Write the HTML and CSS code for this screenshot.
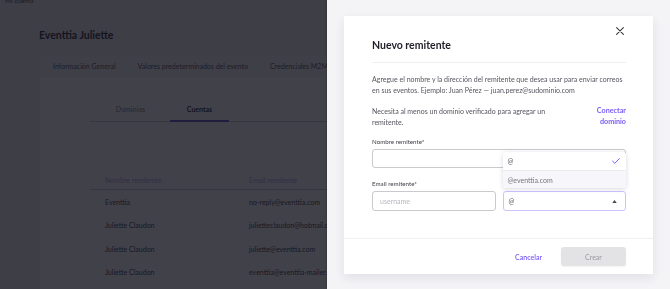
FILE: index.html
```html
<!DOCTYPE html>
<html lang="es">
<head>
<meta charset="utf-8">
<title>Nuevo remitente</title>
<link rel="stylesheet" href="styles.css">
</head>
<body>
<div class="page">
  <div class="crumb">Mi cuenta</div>
  <h1 class="page-title">Eventtia Juliette</h1>
  <nav class="tabs">
    <span class="tab">Información General</span>
    <span class="tab">Valores predeterminados del evento</span>
    <span class="tab">Credenciales M2M</span>
  </nav>
  <section class="panel">
    <div class="subtabs">
      <span class="subtab">Dominios</span>
      <span class="subtab active">Cuentas</span>
    </div>
    <div class="table">
      <div class="row head"><span>Nombre remitente</span><span>Email remitente</span></div>
      <div class="row"><span>Eventtia</span><span>no-reply@eventtia.com</span></div>
      <div class="row"><span>Juliette Claudon</span><span>julietteclaudon@hotmail.com</span></div>
      <div class="row"><span>Juliette Claudon</span><span>juliette@eventtia.com</span></div>
      <div class="row"><span>Juliette Claudon</span><span>eventtia@eventtia-mailer.com</span></div>
    </div>
  </section>
</div>
<div class="overlay"></div>
<aside class="drawer">
  <div class="modal">
    <div class="modal-head">
      <div class="close-row">
        <button class="close" aria-label="Cerrar">
          <svg viewBox="0 0 8 8" width="8" height="8"><path d="M0.6 0.6 L7.4 7.4 M7.4 0.6 L0.6 7.4" stroke="#3a3a40" stroke-width="1.1" stroke-linecap="round"/></svg>
        </button>
      </div>
      <h2 class="modal-title">Nuevo remitente</h2>
    </div>
    <div class="modal-body">
      <p class="intro">Agregue el nombre y la dirección del remitente que desea usar para enviar correos en sus eventos. Ejemplo: Juan Pérez — juan.perez@sudominio.com</p>
      <div class="notice">
        <p>Necesita al menos un dominio verificado para agregar un remitente.</p>
        <a class="link">Conectar<br>dominio</a>
      </div>
      <label class="label">Nombre remitente*</label>
      <div class="input"></div>
      <label class="label second">Email remitente*</label>
      <div class="email-row">
        <div class="input placeholder">username</div>
        <div class="select-wrap">
          <div class="select open">
            <span>@</span>
            <svg class="caret" viewBox="0 0 6 4" width="5" height="3"><path d="M0 4 L3 0 L6 4 Z" fill="#4a4a50"/></svg>
          </div>
          <ul class="menu">
            <li class="opt selected"><span>@</span>
              <svg viewBox="0 0 8 6" width="8" height="6"><path d="M0.6 3.2 L2.8 5.3 L7.4 0.6" fill="none" stroke="#7a5cfa" stroke-width="1" stroke-linecap="round" stroke-linejoin="round"/></svg>
            </li>
            <li class="opt hover">@eventtia.com</li>
          </ul>
        </div>
      </div>
    </div>
    <div class="modal-foot">
      <a class="cancel">Cancelar</a>
      <button class="btn">Crear</button>
    </div>
  </div>
</aside>
</body>
</html>
```
FILE: styles.css
```css
* { box-sizing: border-box; }
html, body { margin: 0; padding: 0; }
body {
  width: 670px;
  height: 289px;
  overflow: hidden;
  font-family: "Lato", "Noto Sans", sans-serif;
  background: #f0eff5;
  color: #333;
}

/* underlying page */
.page {
  width: 670px;
  height: 289px;
  overflow: hidden;
}
.crumb {
  font-size: 6.5px;
  line-height: 8px;
  margin-top: -3px;
  padding-left: 5px;
  color: #444;
}
.page-title {
  margin: 23px 0 0 39px;
  font-size: 10.5px;
  line-height: 14px;
  font-weight: 700;
  color: #22222b;
}
.tabs {
  display: flex;
  gap: 22px;
  margin: 13px 0 0 40px;
  padding: 0 0 0 13px;
  height: 22px;
  align-items: center;
  background: #f6f6f9;
}
.tab {
  font-size: 7px;
  color: #4a4a52;
}
.panel {
  margin-left: 40px;
  background: #ffffff;
  height: 220px;
  padding-top: 28px;
}
.subtabs {
  display: flex;
  gap: 10px;
  margin-left: 50px;
  padding-left: 11px;
  border-bottom: 1px solid #c8c8d0;
}
.subtab {
  width: 59px;
  text-align: center;
  font-size: 7px;
  line-height: 8px;
  padding-bottom: 7px;
  color: #777;
  border-bottom: 2px solid transparent;
  margin-bottom: -1px;
}
.subtab.active {
  color: #222;
  font-weight: 700;
  border-bottom-color: #5d48c8;
}
.table {
  margin: 48px 0 0 50px;
}
.row {
  display: grid;
  grid-template-columns: 144px 1fr;
  padding-left: 15px;
  height: 23.5px;
  align-items: center;
  font-size: 7px;
  color: #33333b;
  white-space: nowrap;
}
.row.head {
  color: #a9a3e6;
  border-bottom: 1px solid #c8c8d0;
  height: 20px;
}

.overlay {
  position: fixed;
  inset: 0;
  background: rgba(18, 17, 28, 0.8);
}

/* drawer */
.drawer {
  position: fixed;
  top: 0;
  right: 0;
  width: 343px;
  height: 289px;
  background: #f4f4f7;
  padding: 16px 17px 0 17px;
  box-shadow: -1px 0 2px rgba(0,0,0,0.15);
}
.modal {
  background: #ffffff;
  height: 258px;
  box-shadow: 0 4px 10px rgba(30, 30, 60, 0.09);
  display: flex;
  flex-direction: column;
}
.modal-head {
  padding: 11px 27px 0 28px;
}
.close-row {
  display: flex;
  justify-content: flex-end;
  height: 8px;
  padding-right: 2px;
}
.close {
  border: 0;
  background: none;
  padding: 0;
  width: 8px;
  height: 8px;
  display: block;
}
.close svg { display: block; }
.modal-title {
  margin: 2px 0 0 0;
  font-size: 10.5px;
  line-height: 16px;
  font-weight: 700;
  color: #1f1f29;
  padding-bottom: 9px;
  border-bottom: 1px solid #efeff2;
}
.modal-body {
  padding: 0 27px 0 28px;
  flex: 1;
}
.intro {
  margin: 11px 0 0;
  font-size: 7px;
  line-height: 10.5px;
  color: #55555f;
}
.notice {
  display: flex;
  justify-content: space-between;
  align-items: flex-start;
  margin-top: 11px;
}
.notice p {
  margin: 0;
  width: 190px;
  font-size: 7px;
  line-height: 10.5px;
  color: #55555f;
}
.link {
  font-size: 7.2px;
  line-height: 10.5px;
  font-weight: 700;
  color: #7a5cfa;
  text-align: right;
}
.label {
  display: block;
  margin-top: 11px;
  font-size: 6.2px;
  line-height: 8px;
  color: #3d3d45;
}
.label.second { margin-top: 12px; }
.input {
  margin-top: 3px;
  height: 19px;
  border: 1px solid #c9c9ce;
  border-radius: 3px;
  font-size: 7px;
  padding: 0 7px;
  display: flex;
  align-items: center;
}
.input.placeholder {
  color: #b8b8be;
  height: 20px;
}
.email-row {
  display: grid;
  grid-template-columns: 1fr 1fr;
  gap: 7px;
  margin-top: 3px;
}
.email-row .input { margin-top: 0; }
.select-wrap { position: relative; }
.select {
  height: 20px;
  border: 1px solid #cdc2fd;
  border-radius: 3px;
  display: flex;
  justify-content: space-between;
  align-items: center;
  padding: 0 8px 0 5px;
  font-size: 7px;
  color: #55555c;
}
.caret { display: block; }
.menu {
  position: absolute;
  left: 0;
  right: 0;
  bottom: calc(100% + 3px);
  margin: 0;
  padding: 0;
  list-style: none;
  background: #fff;
  border-radius: 3px;
  box-shadow: 0 1px 5px rgba(20, 20, 50, 0.16);
  overflow: hidden;
}
.opt {
  height: 18px;
  display: flex;
  justify-content: space-between;
  align-items: center;
  padding: 0 6px 0 5px;
  font-size: 7px;
  color: #55555c;
}
.opt.hover {
  background: #f6f6fb;
  border-top: 1px solid #eaeaf0;
  color: #77777f;
}
.modal-foot {
  border-top: 1px solid #f0f0f3;
  height: 36px;
  display: flex;
  justify-content: flex-end;
  align-items: center;
  gap: 19px;
  padding-right: 27px;
}
.cancel {
  font-size: 7px;
  color: #7a5cfa;
  font-weight: 600;
}
.btn {
  width: 65px;
  height: 19px;
  border: 0;
  border-radius: 3px;
  background: #e3e3e6;
  color: #9a9aa0;
  font-family: inherit;
  font-size: 7px;
  box-shadow: 0 1px 2px rgba(0,0,0,0.06);
}
```
